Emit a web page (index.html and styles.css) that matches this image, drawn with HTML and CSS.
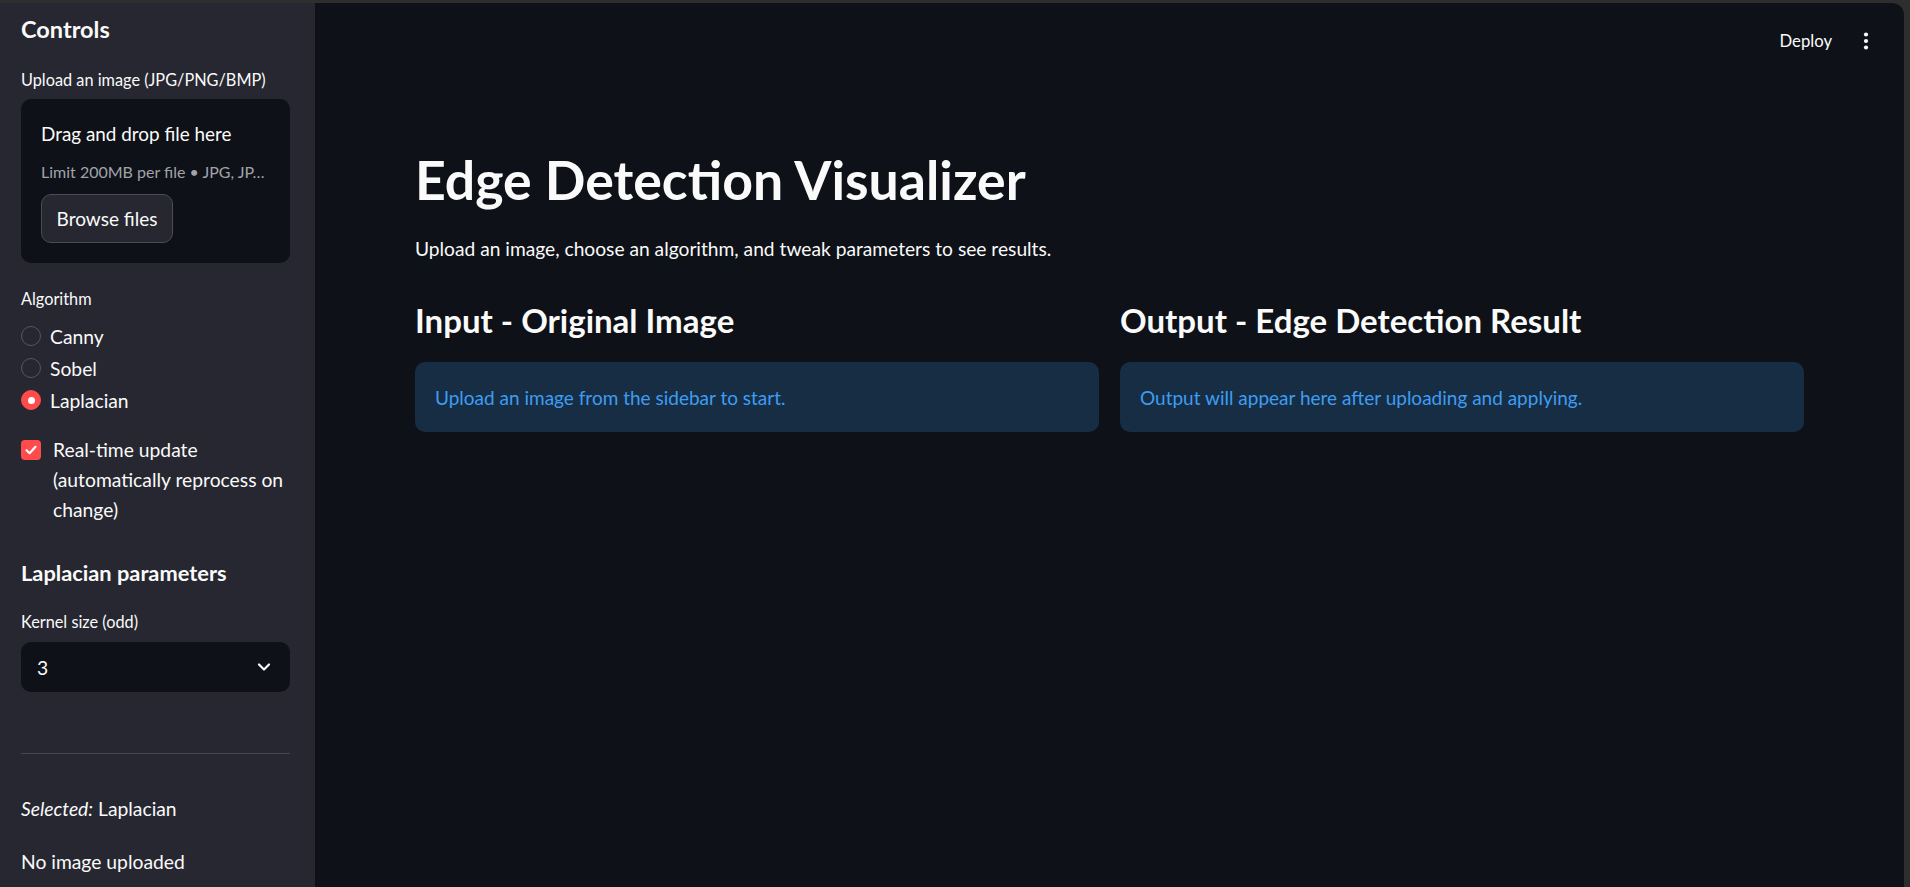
FILE: index.html
```html
<!DOCTYPE html>
<html lang="en">
<head>
<meta charset="utf-8">
<title>Edge Detection Visualizer</title>
<link rel="stylesheet" href="styles.css">
</head>
<body>
<div class="app">
  <aside class="sidebar">
    <h2 class="side-title">Controls</h2>
    <div class="label">Upload an image (JPG/PNG/BMP)</div>
    <div class="dropzone">
      <div class="dz-main">Drag and drop file here</div>
      <div class="dz-sub">Limit 200MB per file • JPG, JP…</div>
      <button class="browse">Browse files</button>
    </div>
    <div class="label label-alg">Algorithm</div>
    <div class="radios">
      <div class="radio-row"><span class="radio"></span><span>Canny</span></div>
      <div class="radio-row"><span class="radio"></span><span>Sobel</span></div>
      <div class="radio-row"><span class="radio radio-on"><span class="radio-dot"></span></span><span>Laplacian</span></div>
    </div>
    <div class="check-row">
      <span class="checkbox">
        <svg width="14" height="14" viewBox="0 0 14 14"><path d="M2.5 7.2 L5.6 10.2 L11.5 3.8" fill="none" stroke="#fff" stroke-width="2.2" stroke-linecap="round" stroke-linejoin="round"/></svg>
      </span>
      <span class="check-text">Real-time update (automatically reprocess on change)</span>
    </div>
    <h3 class="side-sub">Laplacian parameters</h3>
    <div class="label label-kernel">Kernel size (odd)</div>
    <div class="select">
      <span>3</span>
      <svg width="14" height="10" viewBox="0 0 14 10"><path d="M2 2.5 L7 7.5 L12 2.5" fill="none" stroke="#fafafa" stroke-width="2.2" stroke-linecap="round" stroke-linejoin="round"/></svg>
    </div>
    <hr class="divider">
    <p class="side-text side-selected"><em>Selected:</em> Laplacian</p>
    <p class="side-text side-noimg">No image uploaded</p>
  </aside>
  <main class="main">
    <header class="topbar">
      <span class="deploy">Deploy</span>
      <svg class="kebab" width="6" height="18" viewBox="0 0 6 18"><circle cx="3" cy="2.5" r="2.1" fill="#fafafa"/><circle cx="3" cy="9" r="2.1" fill="#fafafa"/><circle cx="3" cy="15.5" r="2.1" fill="#fafafa"/></svg>
    </header>
    <section class="content">
      <h1 class="title">Edge Detection Visualizer</h1>
      <p class="intro">Upload an image, choose an algorithm, and tweak parameters to see results.</p>
      <div class="columns">
        <div class="col">
          <h3 class="col-title">Input - Original Image</h3>
          <div class="info">Upload an image from the sidebar to start.</div>
        </div>
        <div class="col">
          <h3 class="col-title">Output - Edge Detection Result</h3>
          <div class="info">Output will appear here after uploading and applying.</div>
        </div>
      </div>
    </section>
  </main>
</div>
</body>
</html>
```

FILE: styles.css
```css
* { box-sizing: border-box; }

html, body {
  margin: 0;
  padding: 0;
  height: 887px;
  overflow: hidden;
}

body {
  background: #2e2e2e;
  font-family: Lato, "Noto Sans", sans-serif;
  color: #fafafa;
}

.app {
  margin: 3px 6px 0 0;
  height: 884px;
  display: flex;
  background: #0e1117;
  border-top-right-radius: 12px;
  overflow: hidden;
}

/* ---------- Sidebar ---------- */
.sidebar {
  width: 315px;
  flex: 0 0 315px;
  background: #262730;
  padding: 8px 25px 0 21px;
  display: flex;
  flex-direction: column;
}

.side-title {
  margin: 0;
  font-size: 23.5px;
  font-weight: 700;
  line-height: 36px;
  height: 36px;
}

.label {
  font-size: 16.3px;
  line-height: 22px;
  height: 22px;
  margin-top: 22px;
}

.dropzone {
  margin-top: 8px;
  height: 164px;
  background: #0e1117;
  border-radius: 10px;
  padding: 20px 20px 20px 20px;
  display: flex;
  flex-direction: column;
  align-items: flex-start;
}

.dz-main {
  font-size: 18.9px;
  line-height: 30px;
  height: 30px;
}

.dz-sub {
  margin-top: 11px;
  width: 100%;
  font-size: 16px;
  line-height: 24px;
  height: 24px;
  color: #a1a3aa;
  white-space: nowrap;
  overflow: hidden;
}

.browse {
  margin-top: 10px;
  width: 132px;
  height: 49px;
  background: #262730;
  color: #fafafa;
  border: 1px solid #4b4c55;
  border-radius: 10px;
  font-family: Lato, "Noto Sans", sans-serif;
  font-size: 19px;
  padding: 0;
}

.label-alg { margin-top: 25px; }

.radios {
  margin-top: 10px;
  display: flex;
  flex-direction: column;
}

.radio-row {
  height: 32px;
  display: flex;
  align-items: center;
  gap: 9px;
  font-size: 19.3px;
}

.radio {
  width: 20px;
  height: 20px;
  border-radius: 50%;
  border: 1px solid #56575f;
  display: flex;
  align-items: center;
  justify-content: center;
}

.radio-on {
  background: #ff4b4b;
  border-color: #ff4b4b;
}

.radio-dot {
  width: 7px;
  height: 7px;
  border-radius: 50%;
  background: #fff;
}

.check-row {
  margin-top: 19px;
  display: flex;
  align-items: flex-start;
  gap: 12px;
}

.checkbox {
  margin-top: 5px;
  width: 20px;
  height: 20px;
  flex: 0 0 20px;
  border-radius: 4px;
  background: #ff4b4b;
  display: flex;
  align-items: center;
  justify-content: center;
}

.check-text {
  font-size: 19.3px;
  line-height: 30px;
}

.side-sub {
  margin: 33px 0 0;
  font-size: 21.8px;
  font-weight: 700;
  line-height: 30px;
  height: 30px;
}

.label-kernel { margin-top: 23px; }

.select {
  margin-top: 9px;
  height: 50px;
  background: #0e1117;
  border-radius: 10px;
  padding: 0 19px 0 16px;
  display: flex;
  align-items: center;
  justify-content: space-between;
  font-size: 19.3px;
}

.divider {
  margin: 61px 0 0;
  border: 0;
  height: 1px;
  background: #45464e;
}

.side-text {
  margin: 0;
  font-size: 19.3px;
  line-height: 30px;
  height: 30px;
}

.side-selected { margin-top: 40px; }
.side-noimg { margin-top: 23px; }

/* ---------- Main ---------- */
.main {
  flex: 1;
  display: flex;
  flex-direction: column;
}

.topbar {
  height: 76px;
  display: flex;
  justify-content: flex-end;
  align-items: center;
  gap: 31px;
  padding-right: 35px;
}

.deploy {
  font-size: 16.7px;
}

.content {
  padding: 0 100px;
  margin-top: 67px;
}

.title {
  margin: 0;
  font-size: 53.6px;
  font-weight: 700;
  line-height: 66px;
  height: 66px;
}

.intro {
  margin: 22px 0 0;
  font-size: 19.2px;
  line-height: 30px;
  height: 30px;
}

.columns {
  margin-top: 34px;
  display: grid;
  grid-template-columns: 1fr 1fr;
  gap: 21px;
}

.col-title {
  margin: 0;
  font-size: 33px;
  font-weight: 700;
  line-height: 44px;
  height: 44px;
}

.info {
  margin-top: 20px;
  height: 70px;
  border-radius: 10px;
  background: #172d43;
  color: #3d9df3;
  padding: 0 20px;
  display: flex;
  align-items: center;
  font-size: 19px;
}
```
